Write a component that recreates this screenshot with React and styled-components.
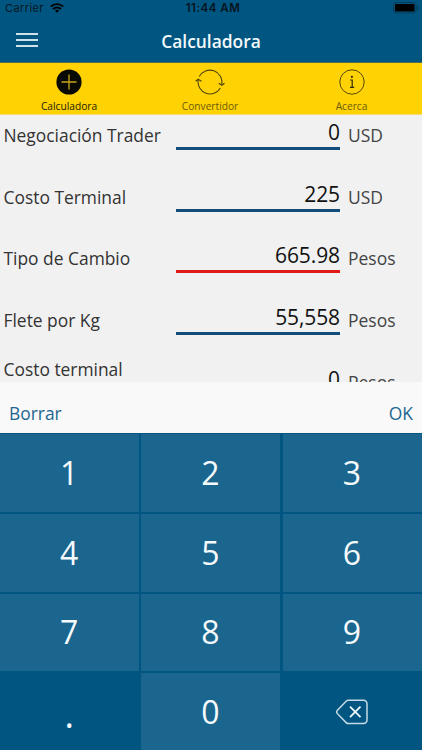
import React from 'react'
import styled, { createGlobalStyle } from 'styled-components'

const GlobalStyle = createGlobalStyle`
  * {
    box-sizing: border-box;
  }
  body {
    margin: 0;
    overflow: hidden;
    font-family: 'Open Sans', 'Noto Sans', sans-serif;
  }
  button {
    padding: 0;
    border: none;
    background: none;
    font: inherit;
    cursor: pointer;
  }
`

const fields = [
  { label: 'Negociación Trader', value: '0', unit: 'USD' },
  { label: 'Costo Terminal', value: '225', unit: 'USD' },
  { label: 'Tipo de Cambio', value: '665.98', unit: 'Pesos', active: true },
  { label: 'Flete por Kg', value: '55,558', unit: 'Pesos' },
  { label: 'Costo terminal', value: '0', unit: 'Pesos', raised: true },
]

const digits = ['1', '2', '3', '4', '5', '6', '7', '8', '9']

const WifiIcon = () => (
  <svg width="14" height="10" viewBox="0 0 14 10" fill="none" stroke="#000" strokeWidth="1.9">
    <path d="M0.8 3.7a8.8 8.8 0 0 1 12.4 0" />
    <path d="M3 6.1a5.7 5.7 0 0 1 8 0" />
    <path d="M7 9.8L4.9 7.8a3 3 0 0 1 4.2 0z" fill="#000" stroke="none" />
  </svg>
)

const BatteryIcon = () => (
  <svg width="26" height="12" viewBox="0 0 26 12">
    <rect x="0.5" y="0.5" width="22.5" height="10.5" rx="2.5" fill="none" stroke="#000" strokeOpacity="0.3" />
    <rect x="2" y="2" width="19.5" height="7.5" rx="1" fill="#000" />
    <path d="M24 4v4c1-.4 1.5-1.1 1.5-2S25 4.4 24 4z" fill="#000" fillOpacity="0.3" />
  </svg>
)

const PlusIcon = () => (
  <svg width="26" height="26" viewBox="0 0 26 26">
    <circle cx="13" cy="13" r="12.6" fill="#0a0a05" />
    <path d="M13 5.5v15M5.5 13h15" stroke="#c9a51c" strokeWidth="1.3" />
  </svg>
)

const ConvertIcon = () => (
  <svg width="32" height="26" viewBox="0 0 32 26" fill="none" stroke="#514608" strokeWidth="1.1">
    <path d="M5.3 7.6A12 12 0 0 1 27.7 15.5" />
    <path d="M26.4 19A12 12 0 0 1 4.2 11" />
    <path d="M1.6 12.2l2.6-2 3.2 2M24.7 14.2l3.2 2 2.6-2" strokeWidth="1.3" />
  </svg>
)

const InfoIcon = () => (
  <svg width="26" height="26" viewBox="0 0 26 26" fill="none" stroke="#514608">
    <circle cx="13" cy="13" r="12.2" />
    <circle cx="12.9" cy="7.8" r="1.1" fill="#302a05" stroke="none" />
    <path d="M11.2 11h2v7.2M11 18.3h4.2" stroke="#302a05" strokeWidth="1.2" />
  </svg>
)

const BackspaceIcon = () => (
  <svg width="32" height="26" viewBox="0 0 32 26" fill="none" stroke="#c5dae6" strokeWidth="1.5">
    <path d="M12.5 1.2h15a3.5 3.5 0 0 1 3.5 3.5v16.4a3.5 3.5 0 0 1-3.5 3.5h-15q-1.4 0-2.4-1L1.2 14.4q-1-1.5 0-3L10.1 2.2q1-1 2.4-1z" />
    <path d="M14 7.7l10.5 10.5M24.5 7.7L14 18.2" stroke="#f0f7fb" strokeWidth="1.8" />
  </svg>
)

const App = () => {
  return (
    <Screen>
      <GlobalStyle />
      <StatusBar>
        <Carrier>
          Carrier <WifiIcon />
        </Carrier>
        <Time>11:44 AM</Time>
        <Battery>
          <BatteryIcon />
        </Battery>
      </StatusBar>
      <NavBar>
        <MenuButton aria-label="Menú">
          <MenuLine />
          <MenuLine />
          <MenuLine />
        </MenuButton>
        <Title>Calculadora</Title>
      </NavBar>
      <Tabs>
        <Tab $active>
          <PlusIcon />
          <TabLabel>Calculadora</TabLabel>
        </Tab>
        <Tab>
          <ConvertIcon />
          <TabLabel>Convertidor</TabLabel>
        </Tab>
        <Tab>
          <InfoIcon />
          <TabLabel>Acerca</TabLabel>
        </Tab>
      </Tabs>
      <Form>
        {fields.map((field) => (
          <Row key={field.label}>
            <Label $raised={field.raised}>{field.label}</Label>
            <Value $active={field.active}>{field.value}</Value>
            <Unit>{field.unit}</Unit>
          </Row>
        ))}
      </Form>
      <Toolbar>
        <ToolbarButton>Borrar</ToolbarButton>
        <ToolbarButton>OK</ToolbarButton>
      </Toolbar>
      <Keypad>
        {digits.map((digit) => (
          <Key key={digit}>{digit}</Key>
        ))}
        <PointKey>.</PointKey>
        <Key>0</Key>
        <Key $plain aria-label="Retroceso">
          <BackspaceIcon />
        </Key>
      </Keypad>
    </Screen>
  )
}

const Screen = styled.div`
  width: 422px;
  height: 750px;
  display: flex;
  flex-direction: column;
  overflow: hidden;
  background: #f1f1f1;
`

const StatusBar = styled.div`
  flex: none;
  height: 18px;
  padding: 0 3px 2px 5px;
  display: grid;
  grid-template-columns: 1fr auto 1fr;
  align-items: center;
  background: #005681;
  color: #06141d;
  font-family: Inter, 'Liberation Sans', sans-serif;
  font-size: 11px;
  line-height: 16px;
`

const Carrier = styled.div`
  display: flex;
  align-items: center;
  gap: 6px;
  letter-spacing: 0.4px;
`

const Time = styled.div`
  margin-left: 2px;
  font-size: 11.5px;
  font-weight: 600;
  letter-spacing: 0.5px;
`

const Battery = styled.div`
  display: flex;
  justify-content: flex-end;
`

const NavBar = styled.header`
  flex: none;
  height: 45px;
  padding: 0 16px;
  display: grid;
  grid-template-columns: 1fr auto 1fr;
  align-items: center;
  background: #005681;
  border-bottom: 1px solid #4d6d52;
`

const MenuButton = styled.button`
  width: 22px;
  display: flex;
  flex-direction: column;
  gap: 4px;
`

const MenuLine = styled.span`
  height: 2px;
  background: #d0e1ea;
`

const Title = styled.h1`
  margin: 1px 0 0;
  color: #f3f9fc;
  font-size: 17.4px;
  font-weight: 600;
  line-height: 24px;
`

const Tabs = styled.nav`
  flex: none;
  height: 52px;
  display: grid;
  grid-template-columns: 138px 144px 139px;
  background: #ffd204;
  border-bottom: 1px solid #f5dc78;
`

const Tab = styled.button`
  display: flex;
  flex-direction: column;
  align-items: center;
  padding-top: 6px;
  color: ${({ $active }) => ($active ? '#1c1905' : '#6b5a08')};
`

const TabLabel = styled.span`
  margin-top: 4px;
  font-size: 10.2px;
  line-height: 14px;
`

const Form = styled.main`
  flex: none;
  height: 267px;
  overflow: hidden;
`

const Row = styled.div`
  height: 61.7px;
  display: grid;
  grid-template-columns: 172.5px 164px 1fr;
  align-items: start;
  padding-left: 3.5px;
`

const Label = styled.label`
  margin-top: ${({ $raised }) => ($raised ? '-5px' : '8px')};
  color: #333;
  font-size: 17.4px;
  line-height: 25px;
  white-space: nowrap;
`

const Value = styled.div`
  height: 35px;
  border-bottom: 3px solid ${({ $active }) => ($active ? '#e01818' : '#124d7c')};
  color: #111;
  font-size: 21px;
  line-height: 35px;
  letter-spacing: -0.1px;
  text-align: right;
`

const Unit = styled.span`
  margin: 8px 0 0 8px;
  color: #444;
  font-size: 17.5px;
  line-height: 25px;
`

const Toolbar = styled.div`
  flex: none;
  height: 51px;
  padding: 11px 9px 0;
  display: flex;
  justify-content: space-between;
  align-items: center;
  background: #f9f9f9;
`

const ToolbarButton = styled.button`
  color: #1d678f;
  font-size: 17.4px;
  line-height: 25px;
`

const Keypad = styled.div`
  flex: 1;
  display: grid;
  grid-template-columns: 138.5px 139px 139px;
  grid-template-rows: repeat(4, 77.8px);
  gap: 2px 2.5px;
  padding-top: 1px;
  background: #005681;
`

const Key = styled.button`
  display: flex;
  align-items: center;
  justify-content: center;
  background: ${({ $plain }) => ($plain ? '#005681' : '#1a668e')};
  color: #f5fafd;
  font-size: 32px;
  line-height: 44px;
`

const PointKey = styled(Key)`
  padding-top: 5px;
  background: #005681;
  font-size: 36px;
`

export default App
